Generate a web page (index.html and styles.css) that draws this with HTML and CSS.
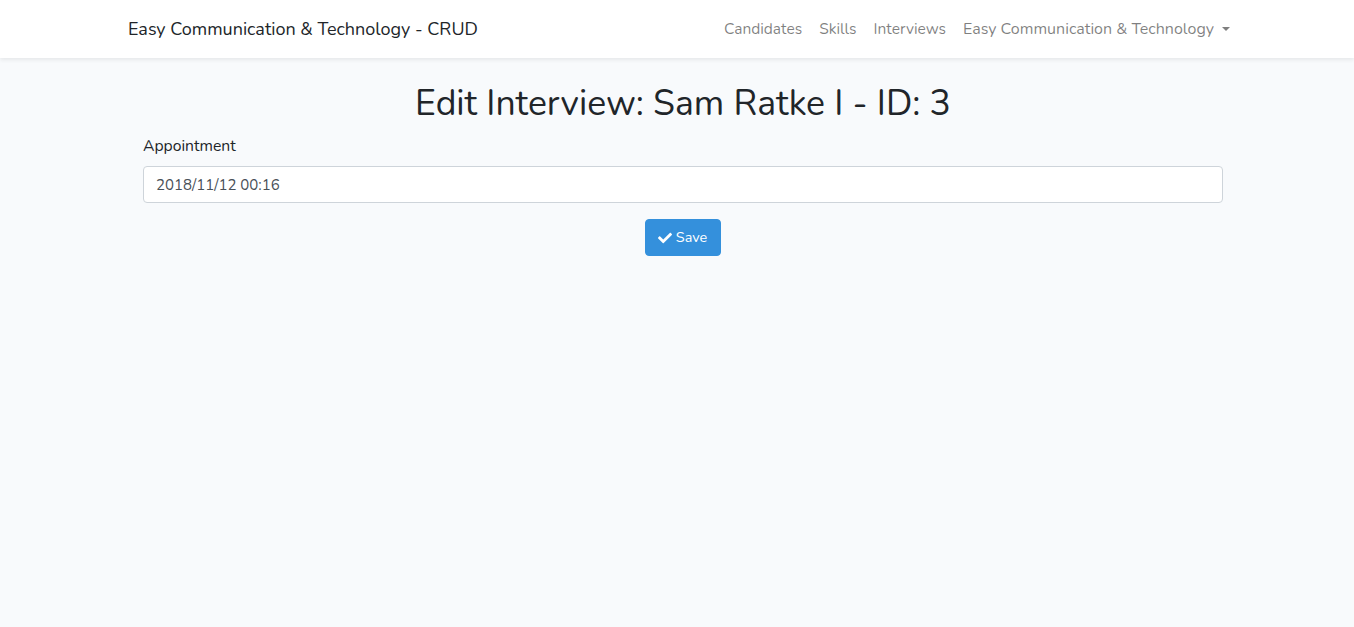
FILE: index.html
```html
<!DOCTYPE html>
<html lang="en">
<head>
<meta charset="utf-8">
<title>Easy Communication &amp; Technology - CRUD</title>
<link rel="stylesheet" href="styles.css">
</head>
<body>
<nav class="navbar">
  <a class="brand" href="#">Easy Communication &amp; Technology - CRUD</a>
  <ul class="nav">
    <li><a href="#">Candidates</a></li>
    <li><a href="#">Skills</a></li>
    <li><a href="#">Interviews</a></li>
    <li><a href="#" class="dropdown">Easy Communication &amp; Technology<span class="caret"></span></a></li>
  </ul>
</nav>
<main class="main">
  <h1 class="title">Edit Interview: Sam Ratke I - ID: 3</h1>
  <form class="form">
    <label class="label" for="appointment">Appointment</label>
    <input class="input" id="appointment" type="text" value="2018/11/12 00:16">
    <div class="actions">
      <button type="button" class="btn">
        <svg class="check" viewBox="0 0 512 512" width="14" height="14" aria-hidden="true"><path fill="currentColor" d="M173.9 439.4l-166.4-166.4c-10-10-10-26.2 0-36.2l36.2-36.2c10-10 26.2-10 36.2 0L192 312.7 432.1 72.6c10-10 26.2-10 36.2 0l36.2 36.2c10 10 10 26.2 0 36.2l-294.4 294.4c-10 10-26.2 10-36.2 0z"/></svg>
        Save
      </button>
    </div>
  </form>
</main>
</body>
</html>
```
FILE: styles.css
```css
* { box-sizing: border-box; }
html, body { margin: 0; padding: 0; }
body {
  background: #f8fafc;
  font-family: "Nunito", "Lato", "Open Sans", sans-serif;
  font-size: 14.4px;
  color: #212529;
  line-height: 1.6;
  min-height: 627px;
}
.navbar {
  background: #fff;
  height: 58px;
  display: flex;
  align-items: center;
  justify-content: space-between;
  padding: 0 124px 0 128px;
  box-shadow: 0 .125rem .25rem rgba(0,0,0,.075);
}
.brand {
  color: #212529;
  text-decoration: none;
  font-size: 18px;
}
.nav {
  list-style: none;
  margin: 0;
  padding: 2px 0 0;
  display: flex;
  gap: 17px;
}
.nav a {
  color: rgba(0,0,0,.5);
  text-decoration: none;
  font-size: 15.5px;
}
.nav .dropdown { font-size: 16px; }
.caret {
  display: inline-block;
  margin-left: 8px;
  vertical-align: 3px;
  border-top: 4px solid rgba(0,0,0,.5);
  border-left: 4px solid transparent;
  border-right: 4px solid transparent;
}
.main {
  padding: 25px 131px 0 143px;
}
.title {
  margin: 0 0 9px;
  text-align: center;
  font-size: 35.6px;
  font-weight: 400;
  line-height: 1.2;
}
.form { display: flex; flex-direction: column; }
.label {
  display: block;
  font-size: 15.7px;
  line-height: 1.45;
  margin-bottom: 9px;
}
.input {
  display: block;
  width: 100%;
  height: 37px;
  padding: 6px 12px;
  font: inherit;
  font-size: 15px;
  color: #495057;
  background: #fff;
  border: 1px solid #ced4da;
  border-radius: 4px;
}
.actions {
  display: flex;
  justify-content: center;
  margin-top: 16px;
}
.btn {
  display: inline-flex;
  align-items: center;
  gap: 4px;
  height: 37px;
  padding: 0 13px 0 12px;
  font: inherit;
  font-size: 14.4px;
  color: #fff;
  background: #3490dc;
  border: 1px solid #3490dc;
  border-radius: 4px;
}
.check { display: block; }
```
